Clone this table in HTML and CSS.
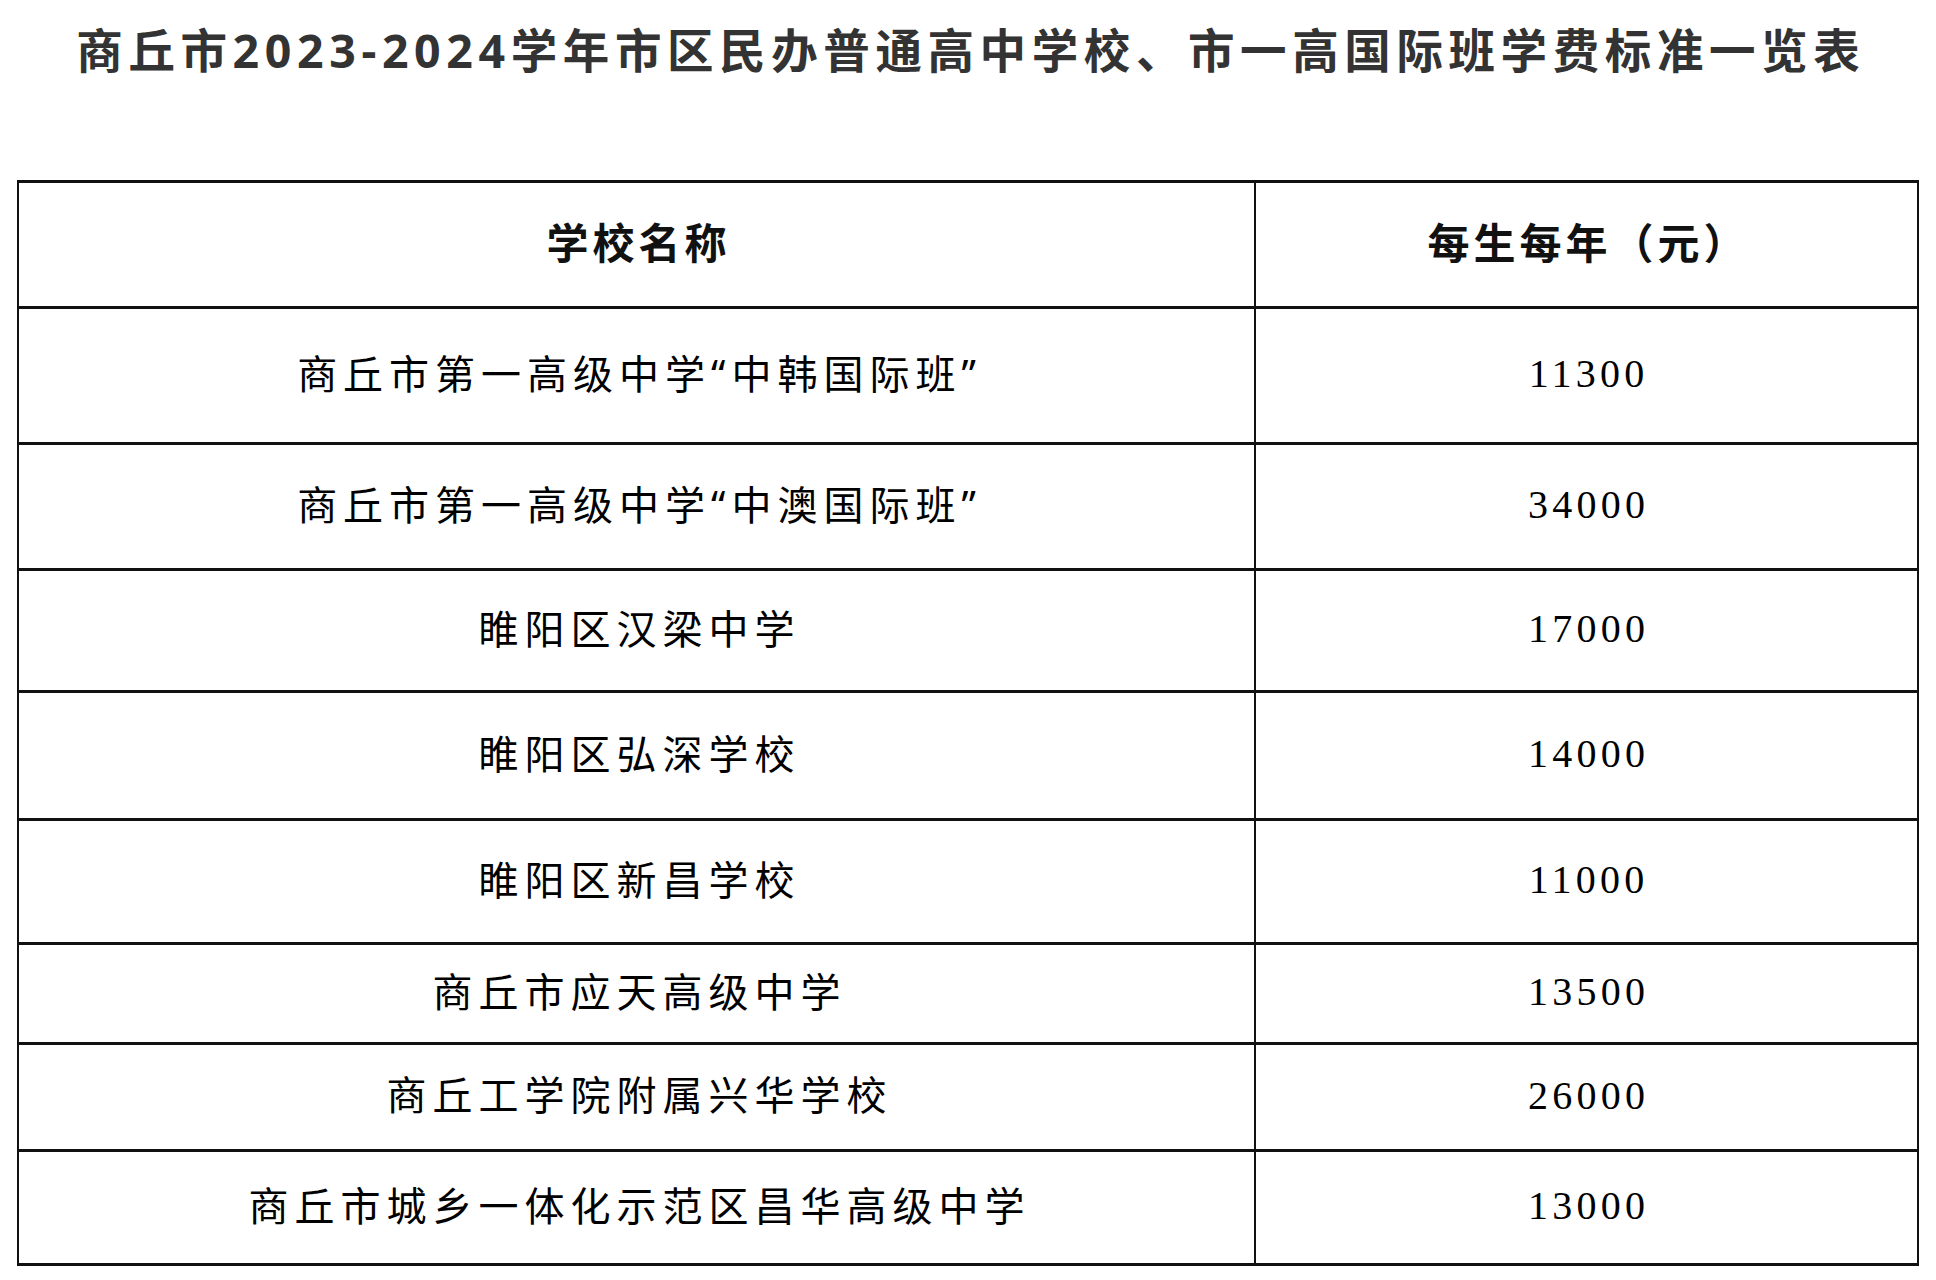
FILE: index.html
```html
<!DOCTYPE html>
<html lang="zh-CN">
<head>
<meta charset="utf-8">
<title>商丘市2023-2024学年市区民办普通高中学校、市一高国际班学费标准一览表</title>
<link rel="stylesheet" href="styles.css">
</head>
<body>
<main class="page">
  <h1 class="title">商丘市2023-2024学年市区民办普通高中学校、市一高国际班学费标准一览表</h1>
  <table class="fees">
    <colgroup>
      <col class="col-name">
      <col class="col-fee">
    </colgroup>
    <thead>
      <tr class="head-row">
        <th>学校名称</th>
        <th>每生每年（元）</th>
      </tr>
    </thead>
    <tbody>
      <tr><td class="name">商丘市第一高级中学“中韩国际班”</td><td class="fee">11300</td></tr>
      <tr><td class="name">商丘市第一高级中学“中澳国际班”</td><td class="fee">34000</td></tr>
      <tr><td class="name">睢阳区汉梁中学</td><td class="fee">17000</td></tr>
      <tr><td class="name">睢阳区弘深学校</td><td class="fee">14000</td></tr>
      <tr><td class="name">睢阳区新昌学校</td><td class="fee">11000</td></tr>
      <tr><td class="name">商丘市应天高级中学</td><td class="fee">13500</td></tr>
      <tr><td class="name">商丘工学院附属兴华学校</td><td class="fee">26000</td></tr>
      <tr><td class="name">商丘市城乡一体化示范区昌华高级中学</td><td class="fee">13000</td></tr>
    </tbody>
  </table>
</main>
</body>
</html>
```

FILE: styles.css
```css
html, body {
  margin: 0;
  padding: 0;
  background: #ffffff;
}

.page {
  width: 1936px;
  padding: 18px 0 0 0;
  box-sizing: border-box;
}

.title {
  margin: 0;
  height: 64px;
  line-height: 64px;
  text-align: center;
  font-family: "Noto Sans", "Noto Sans CJK SC", sans-serif;
  font-weight: 700;
  font-size: 46.5px;
  letter-spacing: 5.6px;
  padding-left: 5.6px;
  color: #333333;
}

.fees {
  margin: 98px 0 0 17px;
  width: 1900px;
  border-collapse: collapse;
  table-layout: fixed;
  border: 2px solid #111111;
}

.col-name { width: 1237px; }
.col-fee { width: 663px; }

.fees th,
.fees td {
  padding: 0 0 8px 0;
  text-align: center;
  vertical-align: middle;
  border-left: 2px solid #111111;
  border-right: 2px solid #111111;
  border-top: 3px solid #111111;
  border-bottom: 3px solid #111111;
  color: #000000;
}

.fees th {
  font-family: "Noto Sans", "Noto Sans CJK SC", sans-serif;
  font-weight: 700;
  font-size: 42px;
  letter-spacing: 4px;
  padding-left: 4px;
  color: #111111;
}

.fees td.name {
  font-family: "Noto Sans", "Noto Sans CJK SC", sans-serif;
  font-weight: 400;
  font-size: 40px;
  letter-spacing: 6px;
  padding-left: 6px;
}

.fees td.fee {
  font-family: "Liberation Serif", "Noto Sans CJK SC", serif;
  font-size: 40px;
  letter-spacing: 4.3px;
  padding-left: 4.3px;
  padding-bottom: 4px;
}

.head-row { height: 126px; }
.fees tbody tr:nth-child(1) { height: 136px; }
.fees tbody tr:nth-child(2) { height: 126px; }
.fees tbody tr:nth-child(3) { height: 122px; }
.fees tbody tr:nth-child(4) { height: 128px; }
.fees tbody tr:nth-child(5) { height: 124px; }
.fees tbody tr:nth-child(6) { height: 100px; }
.fees tbody tr:nth-child(7) { height: 107px; }
.fees tbody tr:nth-child(8) { height: 114px; }
```
